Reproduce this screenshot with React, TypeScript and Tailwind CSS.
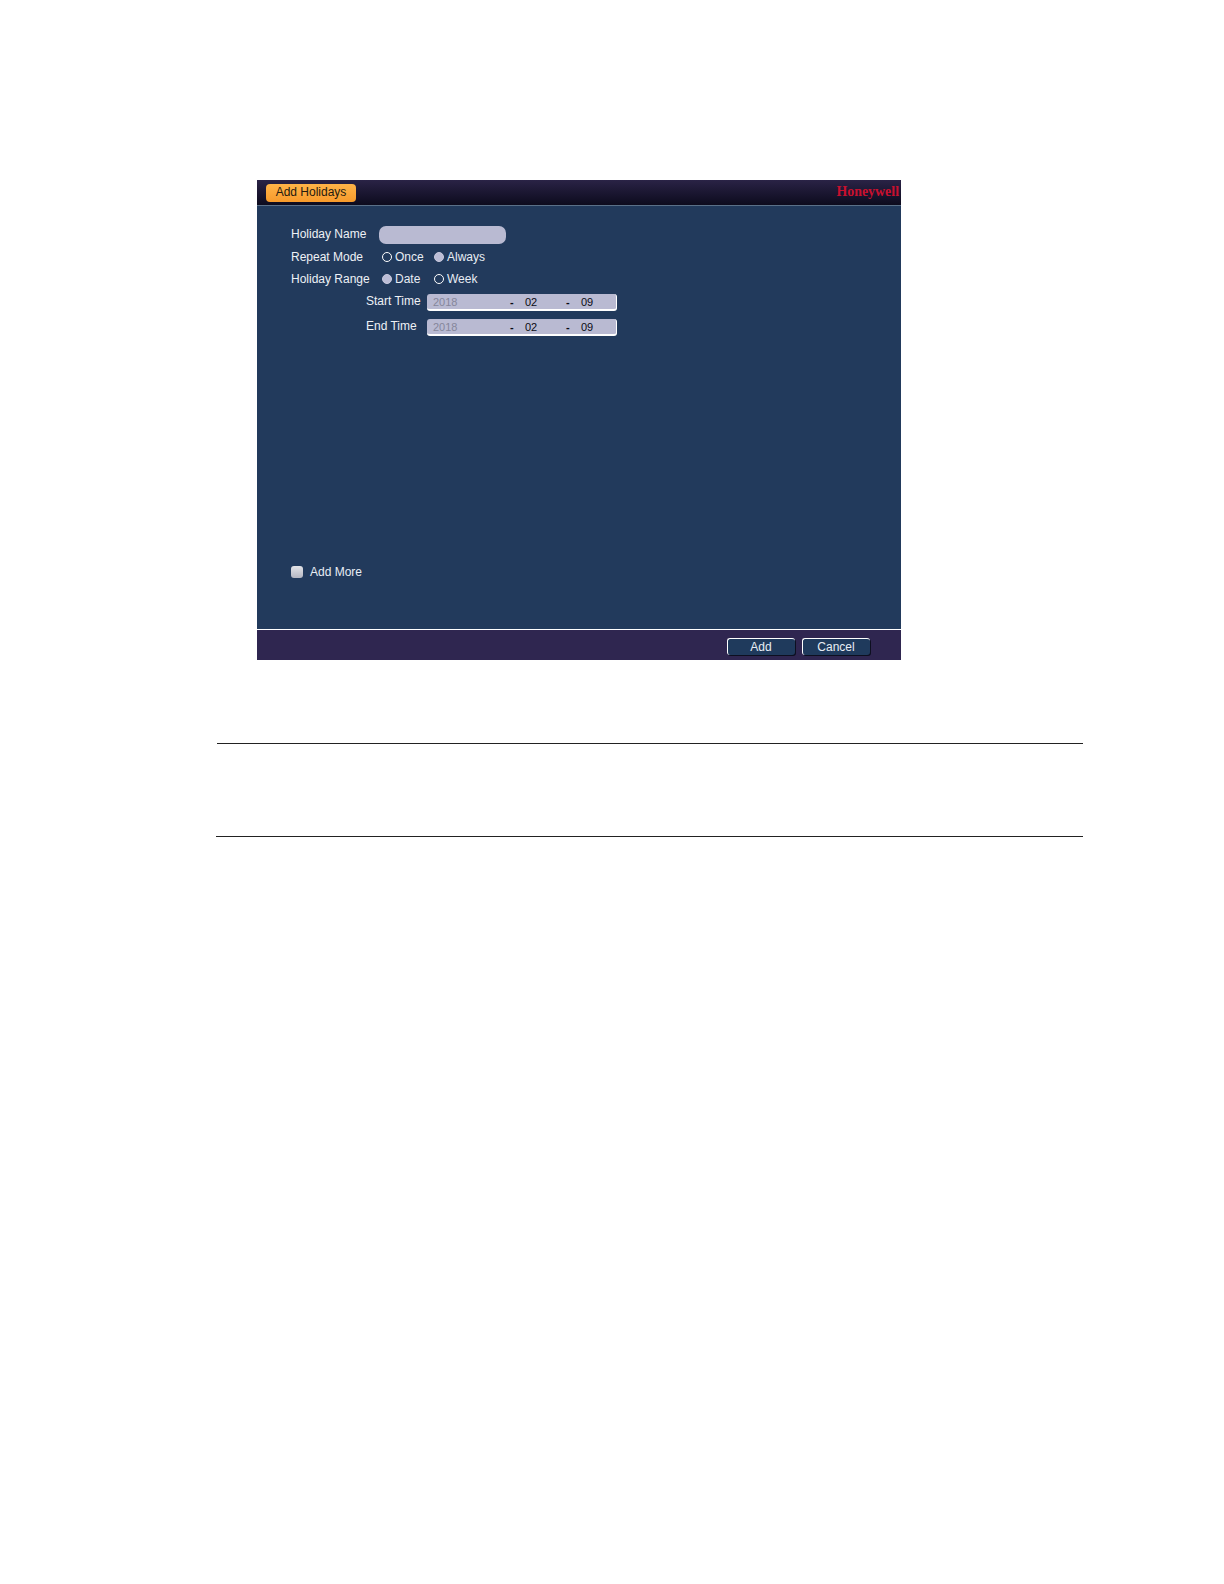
function Radio({ on, label }: { on?: boolean; label: string }) {
  return (
    <div className="flex w-[52px] items-center">
      <span className={`h-[10px] w-[10px] rounded-full border ${on ? 'border-[#c9cade] bg-[#bcbdd6]' : 'border-white'}`} />
      <span className="ml-[3px] text-[12px] text-[#e8edf4]">{label}</span>
    </div>
  );
}

function DateField({ label }: { label: string }) {
  return (
    <div className="flex h-[25px] items-center">
      <span className="w-[136px] pb-[4px] pl-[75px] text-[12px] text-[#eef1f6]">{label}</span>
      <div className="flex h-[17px] w-[190px] items-center rounded-[3px] border-b-2 border-r border-white bg-[#b9bad2] pl-[6px] pt-[1px] text-[11px]">
        <span className="w-[77px] text-[#85869b]">2018</span>
        <span className="w-[15px] font-bold text-[#0a0a14]">-</span>
        <span className="w-[41px] text-[#0a0a14]">02</span>
        <span className="w-[15px] font-bold text-[#0a0a14]">-</span>
        <span className="text-[#0a0a14]">09</span>
      </div>
    </div>
  );
}

function FooterButton({ label }: { label: string }) {
  return (
    <button className="h-[17px] w-[68px] rounded-[3px] border-l border-t border-white bg-[#1f3a5c] pr-[1px] text-[12px] leading-none text-[#e8edf4] shadow-[1px_1px_0_#0d0f20]">
      {label}
    </button>
  );
}

export default function App() {
  return (
    <div className="min-h-[1584px] bg-white font-['Liberation_Sans',sans-serif]">
      <div className="pl-[257px] pt-[180px]">
        <div className="w-[644px]">
          <div className="flex h-[26px] items-center justify-between border-b border-[#5a7088] bg-gradient-to-b from-[#2a2346] to-[#0d0b1e] pl-[9px] pr-[2px]">
            <div className="flex h-[18px] w-[90px] items-center justify-center rounded-[4px] bg-gradient-to-b from-[#ffb347] to-[#f79a2b] pb-[2px] text-[12px] text-[#241a10]">
              Add Holidays
            </div>
            <span className="font-['Liberation_Serif',serif] text-[13.9px] font-bold text-[#c8102e]">Honeywell</span>
          </div>

          <div className="h-[423px] bg-[#223a5c] pl-[34px] pt-[20px]">
            <div className="flex h-[18px] items-center">
              <span className="w-[88px] pb-[3px] text-[12px] text-[#eef1f6]">Holiday Name</span>
              <div className="h-[18px] w-[127px] rounded-[7px] bg-[#b9bad2]" />
            </div>
            <div className="mt-[2px] flex h-[22px] items-center">
              <span className="w-[91px] text-[12px] text-[#eef1f6]">Repeat Mode</span>
              <Radio label="Once" />
              <Radio on label="Always" />
            </div>
            <div className="flex h-[22px] items-center">
              <span className="w-[91px] text-[12px] text-[#eef1f6]">Holiday Range</span>
              <Radio on label="Date" />
              <Radio label="Week" />
            </div>
            <DateField label="Start Time" />
            <DateField label="End Time" />
            <div className="mt-[225px] flex h-[14px] items-center">
              <span className="h-[12px] w-[12px] rounded-[3px] bg-gradient-to-b from-[#e4e4e8] to-[#b5b6c2]" />
              <span className="ml-[7px] text-[12px] text-[#e8edf4]">Add More</span>
            </div>
          </div>

          <div className="h-[1px] bg-white" />
          <div className="flex h-[30px] items-center justify-end gap-[7px] bg-[#2f2650] pr-[31px] pt-[3px]">
            <FooterButton label="Add" />
            <FooterButton label="Cancel" />
          </div>
        </div>
      </div>

      <div className="ml-[217px] mt-[83px] h-[1px] w-[866px] bg-[#222]" />
      <div className="ml-[216px] mt-[92px] h-[1px] w-[867px] bg-[#222]" />
    </div>
  );
}
